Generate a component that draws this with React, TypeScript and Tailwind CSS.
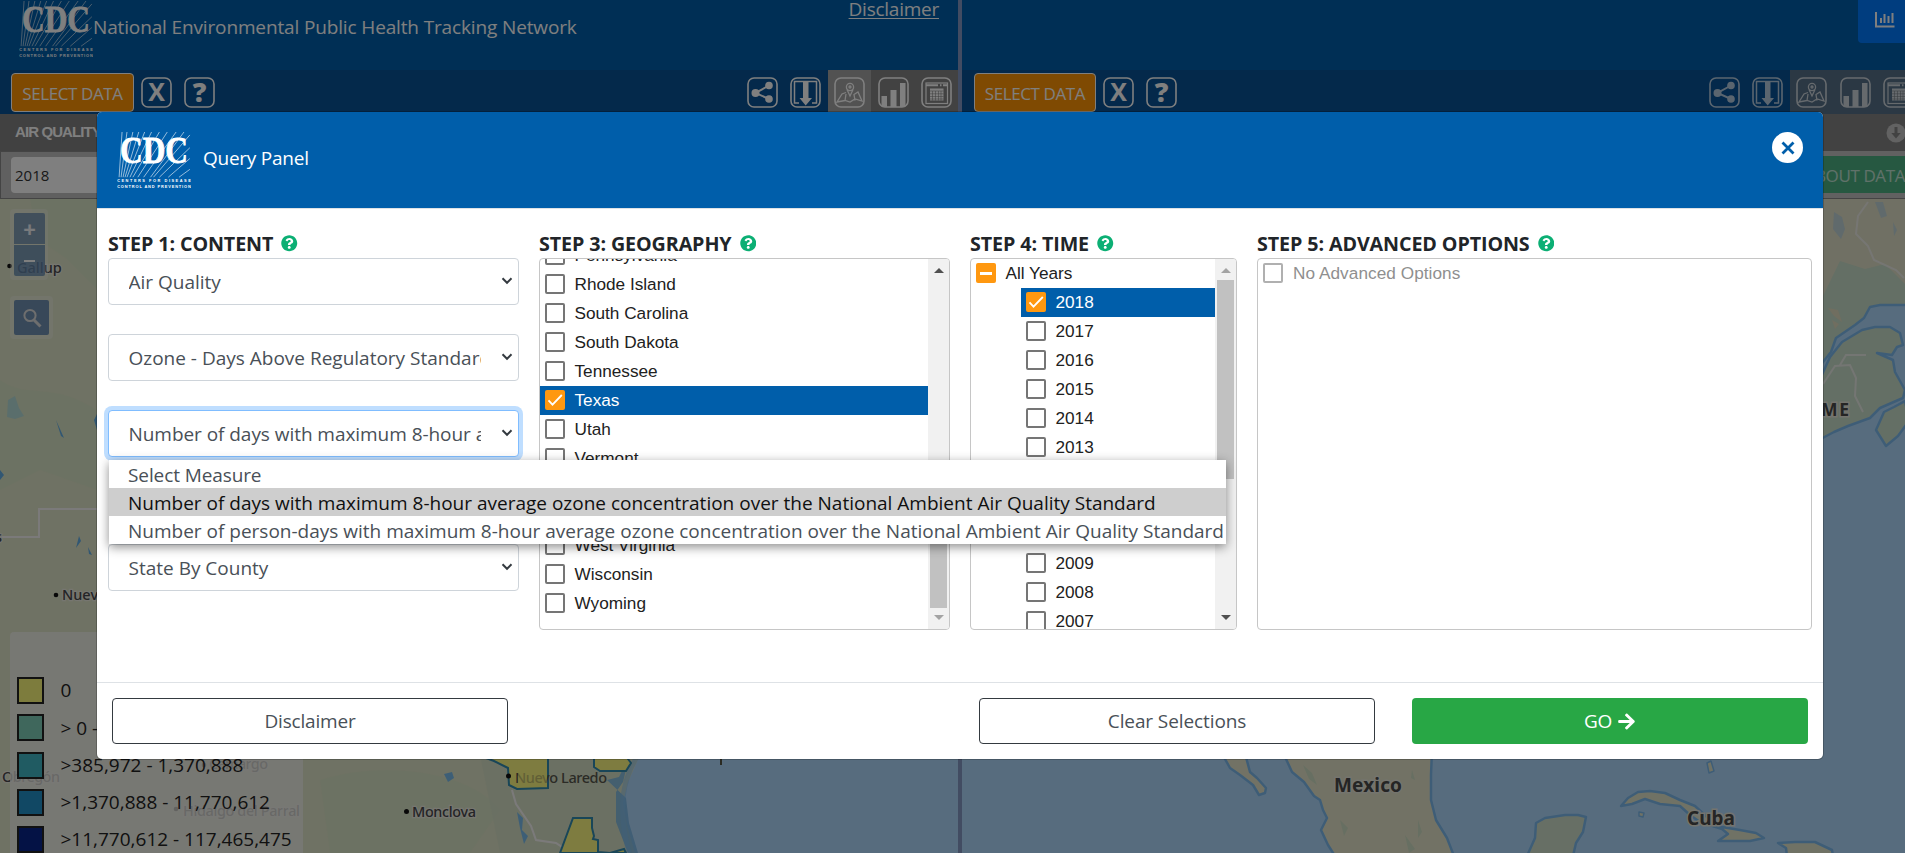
import React from "react";
import { FaArrowRight, FaQuestionCircle } from "react-icons/fa";

const UI = "font-['Open_Sans','Noto_Sans',sans-serif]";
const ARIAL = "font-['Liberation_Sans',Arial,sans-serif]";

function CdcLogo({ className }: { className: string }) {
  const rays = [
    [5, 0, 1, 46], [10, 0, 3, 46], [16, 0, 5, 46], [22, 0, 7, 46], [28, 0, 9, 46], [35, 0, 12, 46],
    [43, 0, 15, 46], [51, 0, 20, 46], [60, 0, 26, 46], [68, 0, 33, 46], [74, 3, 36, 46],
    [74, 16, 42, 46], [74, 27, 51, 46], [74, 38, 62, 46],
  ];
  return (
    <svg viewBox="0 0 75 58" className={className} fill="#fff">
      <g stroke="#fff" strokeWidth="0.7" opacity="0.85">
        {rays.map(([a, b, c, d], i) => (
          <line key={i} x1={a} y1={b} x2={c + 1} y2={d} />
        ))}
      </g>
      <text x="3" y="31.5" fontFamily="Liberation Serif, serif" fontWeight="700" fontSize="38" textLength="69" lengthAdjust="spacingAndGlyphs" stroke="#fff" strokeWidth="0.8">CDC</text>
      <g fontFamily="Liberation Sans, sans-serif" fontSize="4" fontWeight="700">
        <text x="0" y="51" textLength="75" lengthAdjust="spacing">CENTERS FOR DISEASE</text>
        <text x="0" y="57" textLength="75" lengthAdjust="spacing">CONTROL AND PREVENTION</text>
      </g>
    </svg>
  );
}

type Kind = "x" | "help" | "share" | "download" | "map" | "chart" | "table";

function ToolIcon({ kind }: { kind: Kind }) {
  return (
    <svg viewBox="0 0 31 31" className="size-[31px] shrink-0" fill="none" stroke="#fff">
      <rect x="1" y="1" width="29" height="29" rx="6" strokeWidth="1.6" />
      {kind === "x" && (
        <text x="15.5" y="24" textAnchor="middle" fontFamily="Open Sans, sans-serif" fontWeight="700" fontSize="25" fill="#fff" stroke="none">X</text>
      )}
      {kind === "help" && (
        <text x="15.5" y="25" textAnchor="middle" fontFamily="Open Sans, sans-serif" fontWeight="800" fontSize="27" fill="#fff" stroke="none">?</text>
      )}
      {kind === "share" && (
        <g fill="#fff" stroke="none">
          <circle cx="8.500" cy="16" r="4" /><circle cx="22" cy="8.500" r="3.800" /><circle cx="22" cy="22" r="3.800" />
          <path d="M22 8.500 8.500 16 22 22" fill="none" stroke="#fff" strokeWidth="2" />
        </g>
      )}
      {kind === "download" && (
        <g>
          <path d="M9 26H4.500V4.500H26.500V26H22" strokeWidth="1.500" />
          <path d="M13 5h5.500v16h3.500l-6.300 7.500L9.500 21H13z" fill="#fff" stroke="none" />
        </g>
      )}
      {kind === "map" && (
        <g strokeWidth="1.300">
          <circle cx="16" cy="10" r="3.600" /><circle cx="16" cy="10" r="1" />
          <path d="M13 12.500 16 19l3-6.500M12 15.500 8 17 3 25l8-1.500 5 1.500 5-3 7 2-4-9-4 2.500 1 6M11 23.500l1-6.500" />
        </g>
      )}
      {kind === "chart" && (
        <g fill="#fff" stroke="none">
          <rect x="3.500" y="19" width="5.500" height="11" /><rect x="12.500" y="13" width="6" height="17" /><rect x="22" y="6" width="5.500" height="24" />
        </g>
      )}
      {kind === "table" && (
        <g>
          <rect x="5" y="6" width="21.500" height="20.500" strokeWidth="1.200" />
          <path d="M5 8.300h12M19 8.300h1.500M22 8.300h4" strokeWidth="2" />
          <rect x="9" y="11.500" width="13.500" height="12" fill="#fff" stroke="none" />
          <path d="M11.500 14v9.500M14.500 14v9.500M17.500 14v9.500M20 14v9.500M9 14h13.500M9 16.800h13.500M9 19.500h13.500M9 22h13.500" stroke="#777" strokeWidth="0.500" />
        </g>
      )}
    </svg>
  );
}

function IconCell({ kind, className = "" }: { kind: Kind; className?: string }) {
  return (
    <div className={`flex h-[44px] w-[43.6px] shrink-0 items-start justify-center pt-[6.500px] ${className}`}>
      <ToolIcon kind={kind} />
    </div>
  );
}

function Toolbar({ right }: { right?: boolean }) {
  return (
    <div className="flex h-[44px] shrink-0 items-start bg-[#085296] pl-[11px]">
      <button className={`mt-[3px] h-[39px] shrink-0 rounded border border-white bg-[#ff9505] pt-[2px] text-[17px] tracking-[-0.4px] text-white ${right ? "ml-[1px] w-[122px]" : "w-[123px]"}`}>
        SELECT DATA
      </button>
      <div className="flex pl-[0.600px]">
        <IconCell kind="x" />
        <IconCell kind="help" />
      </div>
      <div className={`ml-auto flex shrink-0 ${right ? "-mr-[15.500px]" : "-mr-[0.400px]"}`}>
        <IconCell kind="share" className={right ? "opacity-70" : ""} />
        <IconCell kind="download" className={right ? "opacity-70" : ""} />
        {right ? (
          <div className="flex bg-[#567088]">
            <IconCell kind="map" className="opacity-70" />
            <IconCell kind="chart" className="opacity-70" />
            <IconCell kind="table" className="opacity-70" />
          </div>
        ) : (
          <>
            <IconCell kind="map" className="bg-[#a5a5a5]" />
            <IconCell kind="chart" className="bg-[#858585]" />
            <IconCell kind="table" className="bg-[#858585]" />
          </>
        )}
      </div>
    </div>
  );
}

function LeftMap() {
  return (
    <svg viewBox="0 199 958 654" className="absolute inset-0 h-full w-full" fill="none">
      <rect y="199" width="958" height="654" fill="#afd9fd" />
      <path d="M0 199H958V560L640 755 628 782 623 803 627 825 635 853H0Z" fill="#dfe4c8" />
      <path d="M30 199h67v90l-30-30-30-20zM0 380c30 20 50 0 97 30v80L40 470 0 490zM320 780c60-20 150-10 180 30l-30 43H330z" fill="#d6e4c4" opacity=".6" />
      <path d="M480 755h158l-16 30v25l10 43H500z" fill="#d3e0c6" opacity=".7" />
      <path d="M0 537h39v-28h58M512 790l4 14 15 22 5 14 20 3 15 10" stroke="#f7f5f5" strokeWidth="2" />
      <path d="m8 400 7-4 4 12 5 8-9 3-8-2z" fill="#b5dcd8" />
      <path d="m76 548 3-12 2 5zM88 547l4 8-3-1zM0 470l4 5-4 5zM94 420l3-6v16zM56 420l8 18-3-2z" fill="#63aee6" />
      <path d="m444 774 8-2 2 6-6 4zM517 812l6 6-1 12 6 6-4 8-4-16z" fill="#7bbdec" />
      <path d="m607 780 12-3 10-20-6 25-7 10v30l12 31h10l-9-30-3-25z" fill="#74b5e5" opacity=".8" />
      <path d="M637 757c-14 22-20 50-8 96" stroke="#82bff2" strokeWidth="5" opacity=".5" />
      <g fill="#fcf880" stroke="#338cb0" strokeWidth="2">
        <path d="M478 755l16 6 14 7 1 17 8 4 31-1v-33z" />
        <path d="M594 755v12l6 4h26l5-8-6-8z" />
        <path d="m560 853 13-35h19v10l2 8-1 3 5 1v12l12 1 14-4 2 4z" />
      </g>
      <g fontFamily="Noto Sans, sans-serif" fontSize="14.500" fontWeight="500" fill="#49484c" stroke="#ecece0" strokeWidth="2.500" paintOrder="stroke">
        <text x="17" y="273">Gallup</text>
        <text x="62" y="600">Nuevo Casas</text>
        <text x="-5" y="542">s</text>
        <text x="2" y="782" textLength="58">Obregón</text>
        <text x="209" y="769" textLength="59">Camargo</text>
        <text x="183" y="816" textLength="117">Hidalgo del Parral</text>
        <text x="412" y="817" textLength="64">Monclova</text>
      </g>
      <g fontFamily="Noto Sans, sans-serif" fontSize="14.500" fontWeight="500">
        <text x="515" y="783" textLength="92" fill="#57564c">Nuevo Laredo</text>
        <path d="M518 768h29v18h-29z" fill="#fcf880" opacity=".65" />
      </g>
      <g fill="#111">
        <circle cx="9.500" cy="266" r="2.300" /><circle cx="56" cy="595" r="2.300" /><circle cx="204" cy="765" r="2.300" />
        <circle cx="176" cy="809" r="2.300" /><circle cx="406.500" cy="811.500" r="2.500" /><circle cx="508.500" cy="776" r="2.500" />
        <path d="M720 755h2v10h-2z" fill="#554" />
      </g>
    </svg>
  );
}

function RightMap() {
  return (
    <svg viewBox="962 199 943 654" className="absolute inset-0 h-full w-full" fill="none">
      <rect x="962" y="199" width="943" height="654" fill="#afd9fd" />
      <g stroke="#7dbbee" strokeWidth="2.500" strokeLinejoin="round">
        <path d="M1800 195H1910V305H1880L1870 307 1864 318 1855 325 1836 338 1831 352 1815 372Z" fill="#c9deca" />
        <path d="M1815 390 1830 357 1842 342 1862 330 1875 327 1890 327 1900 333 1903 345 1897 347 1892 355 1877 353 1893 360 1895 372 1905 390 1903 398 1896 401 1880 408 1870 418 1848 426 1834 432 1815 442Z" fill="#c9deca" />
        <path d="m1876 430 8-18 10-5 11-6 4 20-11 15-12 10z" fill="#c9deca" />
        <path d="M1220 750 1246 757 1250 772 1257 778 1266 788 1265 793 1259 795 1253 785 1240 775 1230 768Z" fill="#e4e5cb" />
        <path d="M1280 750 1286 759 1292 772 1304 782 1314 796 1320 800 1323 810 1327 818 1321 830 1328 845 1335 856H1454L1447 838 1436 820 1431 800V775L1432 750Z" fill="#e4e5cb" />
        <path d="M1527 856 1535 838 1536 823 1545 818 1565 815 1578 815 1586 817 1583 832 1576 843 1573 856Z" fill="#cfdfca" />
        <path d="M1621 806 1628 798 1638 792 1650 791 1665 793 1680 800 1695 806 1708 818 1722 827 1740 830 1756 833 1764 838 1750 841 1718 841 1728 834 1722 829 1700 822 1690 815 1680 806 1660 804 1645 799 1632 804Z" fill="#e0e5cb" />
        <path d="M1778 843 1795 842 1815 842 1832 850 1833 856H1787L1786 848Z" fill="#e0e5cb" />
        <path d="m1639 812 5 1-1 4-4-1zM1707 763l4-2 3 10-5 2z" fill="#e0e5cb" strokeWidth="1.500" />
      </g>
      <path d="M1823 199h82v85l-20-20-20 5-25-8-17 35z" fill="#e4e2c8" opacity=".85" />
      <path d="m1834 212 8 5 3 12-4 10-8-10zM1875 202l8 0 4 14-6 2zM1893 222l4 8-3 6z" fill="#b3cfe0" opacity=".7" />
      <path d="m1828 308 10 2 4 12-8-6zM1832 320l7 4-4 5z" fill="#e0dcc0" />
      <path d="M1868 202l-10 14-2 18 12 12 6 14 22 10 8 8M1823 384l12-18 15-1 6 13-1 18 8 16M1840 365l6-10 20 0" stroke="#f0efee" strokeWidth="2" opacity=".8" />
      <path d="m1303 765 9 8 5 12-8-6zM1340 820l8 8-4 8zM1418 820l4 12-4 6zM1405 835l10 14-6 4zM1412 770l3 10-4-2z" fill="#c6dcc0" opacity=".7" />
      <g fontFamily="Noto Sans, sans-serif" fontWeight="700" fill="#4a4a4a" stroke="#e8e8dc" strokeWidth="3" paintOrder="stroke">
        <text x="1821" y="416" fontSize="17.500" textLength="28">ME</text>
        <text x="1334" y="791.500" fontSize="19" textLength="68">Mexico</text>
        <text x="1687" y="825" fontSize="19" textLength="48">Cuba</text>
      </g>
    </svg>
  );
}

const LEGEND = [
  { label: "0", box: "bg-[#fbf87a]" },
  { label: "> 0 - 385,972", box: "bg-[#7fcfb9]" },
  { label: ">385,972 - 1,370,888", box: "bg-[#41b6c4]" },
  { label: ">1,370,888 - 11,770,612", box: "bg-[#2291c8]" },
  { label: ">11,770,612 - 117,465,475", box: "bg-[#08248a]" },
];

function Select({ children, focused, className = "" }: { children: React.ReactNode; focused?: boolean; className?: string }) {
  return (
    <div className={`flex h-[47px] w-[411px] items-center rounded border bg-white pl-[19.500px] pr-[5px] ${focused ? "border-[#80bdff] tracking-[-0.050px] shadow-[0_0_0_4px_#bfdeff]" : "border-[#ced4da]"} ${className}`}>
      <span className="w-[352px] overflow-hidden pt-[2px] text-[19px] whitespace-nowrap text-[#495057]">{children}</span>
      <svg viewBox="0 0 12 8" className="mb-px ml-auto h-[8px] w-[12px]" fill="none" stroke="#343a40" strokeWidth="2">
        <path d="m1.500 1.300 4.500 4.500 4.500-4.500" />
      </svg>
    </div>
  );
}

function Heading({ children }: { children: React.ReactNode }) {
  return (
    <h2 className="flex h-[27px] items-center pb-[2px]">
      <span className="text-[19.700px] leading-[25px] font-bold tracking-[-0.1px] whitespace-nowrap text-[#212529]">{children}</span>
      <FaQuestionCircle className="ml-[8px] size-[16.500px] text-[#0caf74]" />
    </h2>
  );
}

function Check({ state = "off" }: { state?: "off" | "on" | "mixed" | "disabled" }) {
  if (state === "on" || state === "mixed")
    return (
      <span className="flex size-[20px] shrink-0 items-center justify-center rounded-[2px] bg-[#ff9810]">
        <svg viewBox="0 0 20 20" className="size-[20px]" fill="none" stroke="#fff">
          {state === "on" ? <path d="m3.500 10.300 4 4.300L16.800 5" strokeWidth="1.800" /> : <path d="M4 10.500h12" strokeWidth="3" />}
        </svg>
      </span>
    );
  return <span className={`size-[20px] shrink-0 rounded-[2px] border-2 ${state === "disabled" ? "border-[#b0b0b0]" : "border-[#757575]"}`} />;
}

function Row({ label, on, className }: { label: string; on?: boolean; className: string }) {
  return (
    <div className={`flex h-[29px] shrink-0 items-center gap-[9.500px] pb-px pl-[5px] ${on ? "bg-[#005eaa] text-white" : "text-[#212121]"} ${className}`}>
      <Check state={on ? "on" : "off"} />
      <span className="pt-[2px] text-[17.200px] whitespace-nowrap">{label}</span>
    </div>
  );
}

function Scrollbar({ thumb, up, down }: { thumb: string; up: string; down: string }) {
  return (
    <div className="flex h-full w-[21px] shrink-0 flex-col items-center bg-[#f1f1f1]">
      <svg viewBox="0 0 10 5" className="mt-[9px] mb-[7px] h-[5px] w-[10px] shrink-0"><path d="M0 5 5 0l5 5z" className={up} /></svg>
      <div className={`w-[17px] bg-[#c1c1c1] ${thumb}`} />
      <svg viewBox="0 0 10 5" className="mt-auto mb-[9px] h-[5px] w-[10px] shrink-0"><path d="M0 0 5 5l5-5z" className={down} /></svg>
    </div>
  );
}

const STATES = ["Pennsylvania", "Rhode Island", "South Carolina", "South Dakota", "Tennessee", "Texas", "Utah", "Vermont", "Virginia", "Washington", "West Virginia", "Wisconsin", "Wyoming"];
const YEARS = ["2018", "2017", "2016", "2015", "2014", "2013", "2012", "2011", "2010", "2009", "2008", "2007"];

export default function App() {
  return (
    <div className={`relative h-[853px] w-[1905px] overflow-hidden ${UI}`}>
      <div className="flex h-full">
        <section className="flex w-[958px] shrink-0 flex-col">
          <header className="flex h-[70px] shrink-0 items-start bg-[#005eaa] pl-[19px] text-[19px] text-white">
            <CdcLogo className="mt-[1px] h-[57px] w-[74px]" />
            <span className="mt-[14px] leading-[26px] whitespace-nowrap tracking-[-0.14px]">National Environmental Public Health Tracking Network</span>
            <a className="mt-[-4px] mr-[19px] ml-auto leading-[26px] tracking-[-0.25px] underline underline-offset-2">Disclaimer</a>
          </header>
          <Toolbar />
          <div className={`flex h-[37px] shrink-0 items-center bg-[#838383] pb-px pl-[15px] text-[15px] font-bold tracking-[-0.9px] whitespace-nowrap text-white ${ARIAL}`}>AIR QUALITY - OZONE</div>
          <div className="flex h-[48px] shrink-0 items-start border border-[#888] bg-[#c0c0c0] pt-[5px] pl-[10px]">
            <div className="flex h-[36px] w-[300px] items-center rounded bg-white pt-px pl-[4px] text-[15px] text-[#333]">2018</div>
          </div>
          <div className="relative flex-1">
            <LeftMap />
            <div className="absolute top-[10px] left-[10px] flex w-[38px] flex-col gap-[1px] rounded bg-white/25 px-[4px] py-[4px]">
              <div className="flex h-[31px] w-[31px] items-center justify-center rounded-t-[2px] bg-[#7896b4]/90 text-[22px] font-bold text-white/90">+</div>
              <div className="flex h-[31px] w-[31px] items-center justify-center rounded-b-[2px] bg-[#5a82ac]/75"><span className="h-[2px] w-[11px] bg-white" /></div>
            </div>
            <div className="absolute top-[97px] left-[10px] rounded bg-white/25 p-[4px]">
              <div className="flex size-[35px] items-center justify-center rounded-[2px] bg-[#7090b2]">
                <svg viewBox="0 0 20 20" className="size-[20px]" fill="none" stroke="#dcdcdc"><circle cx="8" cy="7.500" r="5.600" strokeWidth="2" /><path d="m12 12 6.500 6.500" strokeWidth="3" /></svg>
              </div>
            </div>
            <div className="absolute top-[433px] left-[10px] flex h-[221px] w-[293px] flex-col gap-[10.300px] rounded-t bg-[#f2f2ee]/80 pt-[45px] pl-[7px]">
              {LEGEND.map((l) => (
                <div key={l.label} className="flex h-[27px] shrink-0 items-center gap-[16.500px]">
                  <span className={`size-[27px] border-2 border-[#222] ${l.box}`} />
                  <span className="text-[19px] whitespace-nowrap text-[#222]">{l.label}</span>
                </div>
              ))}
            </div>
          </div>
        </section>
        <div className="w-[4px] shrink-0 bg-[#8499c4]" />
        <section className="flex w-[943px] shrink-0 flex-col">
          <header className="flex h-[70px] shrink-0 items-start justify-end bg-[#005eaa]">
            <div className="h-[43px] w-[47px] rounded-bl bg-[#007bff] pt-[12px] pl-[17px]">
              <svg viewBox="0 0 20 16" className="h-[16px] w-[20px]" fill="none" stroke="#fff"><path d="M1 0v14.500h18.500" strokeWidth="2" /><path d="M6 11V6M9.500 11V2M13.500 11V4M17.500 11V1" strokeWidth="2" /></svg>
            </div>
          </header>
          <Toolbar right />
          <div className="flex h-[37px] shrink-0 items-center justify-end bg-[#858585]">
            <svg viewBox="0 0 20 20" className="size-[20px] shrink-0"><circle cx="11" cy="10" r="9.500" fill="#c4c4c4" /><path d="M9.500 4h3v6h3.200L11 15.500 6.300 10h3.200z" fill="#858585" /></svg>
          </div>
          <div className="flex h-[48px] shrink-0 items-start justify-end border-b border-[#888] bg-[#c2c2c2] pt-[5px]">
            <div className="flex h-[37px] w-[120px] items-center justify-end bg-[#4cb082] pt-[2px] text-[17px] tracking-[-0.400px] whitespace-nowrap text-white/65">ABOUT DATA</div>
          </div>
          <div className="relative flex-1"><RightMap /></div>
        </section>
      </div>

      <div className="absolute inset-0 bg-black/50" />

      <div className="absolute top-[112px] left-[97px] flex h-[647px] w-[1726px] flex-col rounded-[5px] bg-white shadow-[0_0_0_1px_rgba(0,0,0,0.2)]">
        <div className="flex h-[97px] shrink-0 items-start rounded-t-[5px] border-b border-[#dee2e6] bg-[#005eaa] pr-[20px] pl-[20px]">
          <CdcLogo className="mt-[20px] h-[57px] w-[74px]" />
          <span className="mt-[33px] ml-[12px] text-[19px] leading-[26px] font-medium tracking-[-0.25px] whitespace-nowrap text-white">Query Panel</span>
          <button className="mt-[20px] ml-auto flex size-[31px] items-center justify-center rounded-full bg-white">
            <svg viewBox="0 0 14 14" className="size-[14px]" stroke="#005eaa" strokeWidth="2.800"><path d="M1.500 1.500 12.500 12.500M12.500 1.500 1.500 12.500" /></svg>
          </button>
        </div>
        <div className="flex h-[474px] shrink-0 border-b border-[#dee2e6] pt-[22px] pl-[11px]">
          <div className="w-[431px] shrink-0">
            <Heading>STEP 1: CONTENT</Heading>
            <Select>Air Quality</Select>
            <Select className="mt-[29px]">Ozone - Days Above Regulatory Standards</Select>
            <Select className="mt-[29px]" focused>Number of days with maximum 8-hour average</Select>
            <Select className="mt-[87px]">State By County</Select>
          </div>
          <div className="w-[431px] shrink-0">
            <Heading>STEP 3: GEOGRAPHY</Heading>
            <div className={`flex h-[372px] w-[411px] overflow-hidden rounded border border-[#c6c6c6] ${ARIAL}`}>
              <div className="flex-1 overflow-hidden">
                {STATES.map((s, i) => <Row key={s} label={s} on={s === "Texas"} className={i === 0 ? "-mt-[18px]" : ""} />)}
              </div>
              <Scrollbar thumb="mt-[191px] h-[137px]" up="fill-[#505050]" down="fill-[#a3a3a3]" />
            </div>
          </div>
          <div className="w-[287px] shrink-0">
            <Heading>STEP 4: TIME</Heading>
            <div className={`flex h-[372px] w-[267px] overflow-hidden rounded border border-[#c6c6c6] ${ARIAL}`}>
              <div className="flex-1 overflow-hidden">
                <div className="flex h-[29px] items-center gap-[9.500px] pb-px pl-[5px] text-[#212121]">
                  <Check state="mixed" />
                  <span className="pt-[2px] text-[17.200px]">All Years</span>
                </div>
                <div className="ml-[50px]">
                  {YEARS.map((y) => <Row key={y} label={y} on={y === "2018"} className="" />)}
                </div>
              </div>
              <Scrollbar thumb="h-[199px]" up="fill-[#a3a3a3]" down="fill-[#505050]" />
            </div>
          </div>
          <div>
            <Heading>STEP 5: ADVANCED OPTIONS</Heading>
            <div className={`h-[372px] w-[555px] rounded border border-[#c6c6c6] ${ARIAL}`}>
              <div className="flex h-[29px] items-center gap-[10px] pb-px pl-[5px] text-[#8f8f8f]">
                <Check state="disabled" />
                <span className="pt-[2px] text-[17.200px] tracking-[0.060px]">No Advanced Options</span>
              </div>
            </div>
          </div>
        </div>
        <div className="flex flex-1 items-start px-[15px] pt-[15px] text-[19px] tracking-[-0.200px]">
          <button className="h-[46px] w-[396px] rounded border border-[#343a40] text-[#495057]">Disclaimer</button>
          <button className="ml-auto h-[46px] w-[396px] rounded border border-[#343a40] tracking-[-0.100px] text-[#495057]">Clear Selections</button>
          <button className="ml-[37px] flex h-[46px] w-[396px] items-center justify-center gap-[5px] rounded bg-[#28a745] text-white">
            GO <FaArrowRight className="size-[19px]" />
          </button>
        </div>
      </div>

      <div className="absolute top-[460px] left-[109px] w-[1117px] bg-white text-[19px] leading-[30px] whitespace-nowrap text-[#495057] shadow-[0_3px_10px_rgba(0,0,0,0.45)]">
        <div className="h-[28px] pl-[19px] tracking-[-0.100px]">Select Measure</div>
        <div className="h-[28px] bg-[#cecece] pl-[19px] text-[#101010]">Number of days with maximum 8-hour average ozone concentration over the National Ambient Air Quality Standard</div>
        <div className="h-[28px] pl-[19px]">Number of person-days with maximum 8-hour average ozone concentration over the National Ambient Air Quality Standard</div>
      </div>
    </div>
  );
}
